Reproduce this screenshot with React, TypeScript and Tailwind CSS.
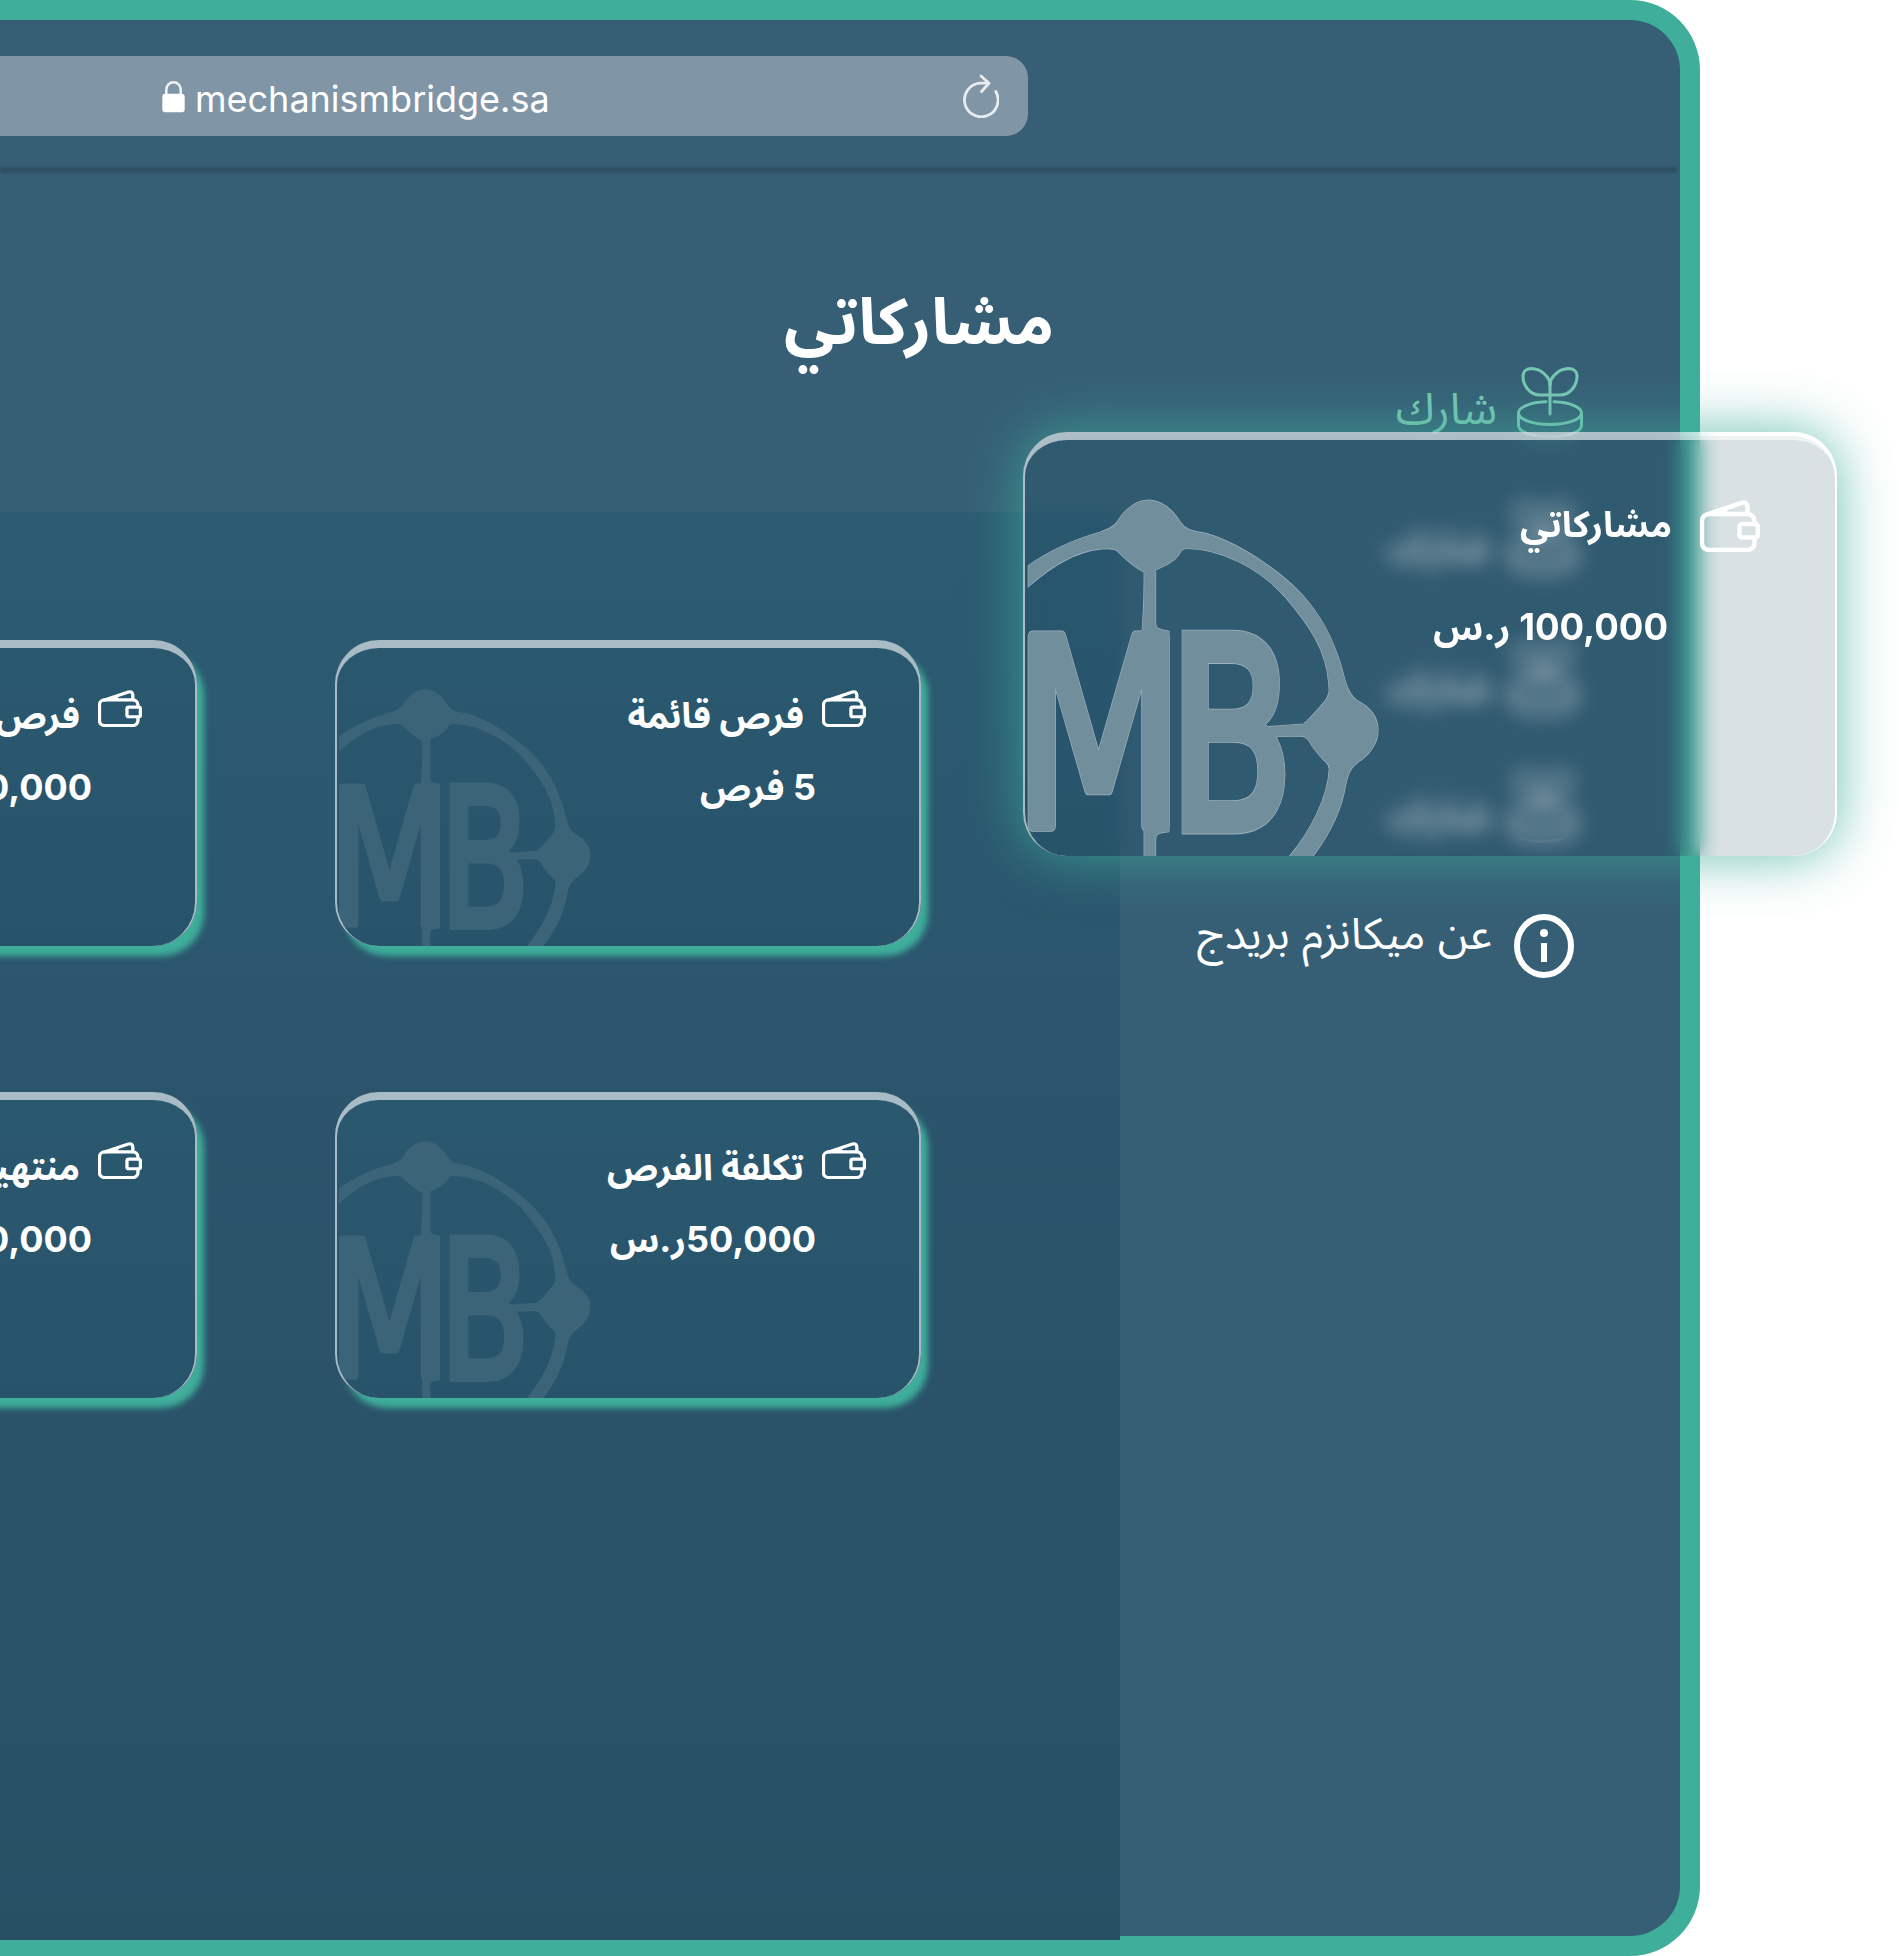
type IconProps = { className?: string };

function WalletIcon({ className }: IconProps) {
  return (
    <svg viewBox="0 0 60 52" preserveAspectRatio="none" fill="none" stroke="currentColor" strokeWidth="4.500" strokeLinejoin="round" strokeLinecap="round" className={className}>
      <path d="M54.500 23.500V21a7 7 0 0 0-7-7H9a7 7 0 0 0-7 7v22a7 7 0 0 0 7 7h38.500a7 7 0 0 0 7-7v-5" />
      <path d="M9 14 41.500 2.900Q47.300 1.400 47.500 7.500V13.500" />
      <path d="M10 13 27 8.500V13Z" fill="currentColor" strokeWidth="1" />
      <rect x="39.500" y="24" width="18.300" height="13.600" rx="2.500" />
    </svg>
  );
}

function PlantIcon({ className }: IconProps) {
  return (
    <svg viewBox="0 0 66 72" fill="none" stroke="currentColor" strokeWidth="3" strokeLinecap="round" className={className}>
      <path d="M33 28H23C12 28 6 17.500 6 9.500 6 4 10 1.600 14.500 1.600 24 2 33 9.500 33 18" />
      <path d="M33 28h10c11 0 17-10.500 17-18.500 0-5.500-4-7.900-8.500-7.900C42 2 33 9.500 33 18" />
      <path d="M33 16v31" />
      <path d="M29 34.700C13.500 35.200 1.500 40 1.500 46c0 6.400 14 11.500 31.500 11.500S64.500 52.400 64.500 46c0-6-12-10.800-27.500-11.300" />
      <path d="M1.500 46v12.500c0 6.400 14 11.500 31.500 11.500s31.500-5.100 31.500-11.500V46" />
    </svg>
  );
}

function InfoIcon({ className }: IconProps) {
  return (
    <svg viewBox="0 0 60 64" className={className}>
      <ellipse cx="30" cy="32" rx="27" ry="29" fill="none" stroke="currentColor" strokeWidth="6" />
      <circle cx="30" cy="19" r="4" fill="currentColor" />
      <rect x="27" y="29" width="6" height="19" fill="currentColor" />
    </svg>
  );
}

function LockIcon() {
  return (
    <svg viewBox="0 0 23 33" className="h-[33px] w-[23px]">
      <path d="M4.300 15V9.500a7.200 7.200 0 0 1 14.400 0V15" fill="none" stroke="#eef1f4" strokeWidth="2.600" />
      <rect x="0.300" y="13.800" width="22.400" height="18.400" rx="3" fill="#fff" />
    </svg>
  );
}

function ReloadIcon() {
  return (
    <svg viewBox="0 0 38 44" fill="none" stroke="#e9edf0" strokeWidth="2.800" strokeLinecap="round" strokeLinejoin="round" className="h-[44px] w-[38px]">
      <path d="M34.800 17.500A16.800 16.800 0 1 1 19 9.200h8" />
      <path d="m20 2 8 7.200-7.500 8.300" />
    </svg>
  );
}

const RING =
  "M85 655C150 610 220 580 300 558C330 548 345 540 352 528C375 490 410 465 447 465C485 465 520 495 542 530C555 550 575 555 610 560C700 580 850 670 925 760C985 830 1015 905 1035 985C1045 1020 1055 1035 1070 1045C1110 1065 1135 1095 1135 1132C1135 1170 1110 1205 1075 1225C1055 1240 1045 1255 1038 1290C1025 1370 985 1440 940 1498L870 1498C930 1430 985 1330 989 1245C989 1230 980 1228 968 1215C950 1195 940 1185 932 1170C922 1152 915 1150 900 1149L800 1152L760 1153L760 1123L800 1123L912 1115C920 1108 950 1078 975 1050C990 1030 990 1020 987 995C980 900 930 830 860 750C780 660 660 605 560 605C545 605 545 612 535 625C520 645 495 655 467 667L467 820C467 840 475 838 507 846L507 1427C475 1432 467 1432 467 1450L467 1498L433 1498L433 1020L427 845C430 800 434 760 433 674C405 660 375 635 352 612C340 602 320 605 300 607C220 615 150 660 85 716Z";

function LogoShapes({ grow }: { grow: number }) {
  return (
    <>
      <path d={RING} strokeWidth={grow * 6} />
      <g fontFamily="DejaVu Sans" fontWeight="400" fontSize="100">
        <text transform="translate(38.400 1410) scale(5.97 7.54)" strokeWidth={4 + grow} strokeLinejoin="round">M</text>
        <text transform="translate(505 1416.600) scale(5.5 7.64)" strokeWidth={4.3 + grow}>B</text>
      </g>
    </>
  );
}

function Logo({ className, outlined }: { className: string; outlined?: boolean }) {
  return (
    <svg direction="ltr" viewBox="69 267 1081 1231" preserveAspectRatio="none" className={className}>
      {outlined && (
        <g fill="#a0b4bf" stroke="#a0b4bf">
          <LogoShapes grow={0.6} />
        </g>
      )}
      <g fill="currentColor" stroke="currentColor">
        <LogoShapes grow={0} />
      </g>
    </svg>
  );
}

function StatCard({ title, value }: { title: string; value: string }) {
  return (
    <div className="relative h-[306px] w-[586px] rounded-[44px] shadow-[8px_11px_6px_-1px_#3fae9b]">
      <div dir="ltr" className="absolute inset-0 overflow-hidden rounded-[44px] bg-gradient-to-b from-[#2a586f] to-[#28546b]">
        <Logo className="h-[306px] w-[259px] text-[#3c6478]" />
      </div>
      <div className="relative h-full rounded-[44px] border-x-2 border-t-8 border-white/60 pt-[42px] pr-[53px]">
        <div className="flex items-start gap-[18px]">
          <WalletIcon className="h-[37px] w-[44px] shrink-0" />
          <h2 className="text-[36px] leading-[50px] font-bold whitespace-nowrap">{title}</h2>
        </div>
        <p className="mt-[23px] mr-[50px] text-[36px] leading-[48px] font-bold whitespace-nowrap">{value}</p>
      </div>
    </div>
  );
}

function NavItem({ className }: { className: string }) {
  return (
    <li className={`flex h-[72px] items-start gap-[20px] ${className}`}>
      <PlantIcon className="h-[72px] w-[66px]" />
      <span className="mt-[11px] text-[44px] leading-[60px]">شارك</span>
    </li>
  );
}

function FloatingCard() {
  return (
    <section className="absolute top-[432px] left-[1023px] h-[424px] w-[814px]">
      <div className="absolute inset-0 overflow-hidden rounded-[44px] backdrop-blur-[10px]">
        <div className="absolute inset-x-0.5 top-1 bottom-0 rounded-[42px] bg-[rgba(16,61,81,0.155)]" />
        <Logo outlined className="relative h-[424px] w-[360px] text-[#718e9c]" />
      </div>
      <div dir="rtl" className="relative h-full rounded-[44px] border-x-2 border-t-8 border-white/60 pt-[60px] pr-[75px] shadow-[0_0_56px_rgba(63,174,155,0.78)]">
        <div className="flex items-start gap-[28px]">
          <WalletIcon className="h-[52px] w-[60px] shrink-0" />
          <h2 className="text-[36px] leading-[48px] font-bold">مشاركاتي</h2>
        </div>
        <p className="mt-[51px] mr-[92px] text-[36.500px] leading-[48px] font-bold">100,000 ر.س</p>
      </div>
    </section>
  );
}

export default function App() {
  return (
    <div className="relative h-[1956px] w-[1899px] overflow-hidden bg-white font-['Inter','Noto_Sans_Arabic',sans-serif] text-white">
      <div className="h-[1956px] w-[1700px] rounded-r-[70px] bg-[#3fae9b] py-5 pr-5">
        <div className="flex h-[1916px] flex-col rounded-r-[50px] bg-[#365f76]">
          <header className="h-[147px] shrink-0 pt-9">
            <div className="flex h-20 w-[1028px] items-center rounded-r-[22px] bg-[#8096a6] pr-[29px] pl-[162px]">
              <LockIcon />
              <span className="ml-[10px] pt-1.5 text-[36px] leading-[48px] font-normal">mechanismbridge.sa</span>
              <span className="ml-auto">
                <ReloadIcon />
              </span>
            </div>
          </header>
          <div className="h-1.5 w-[1677px] shrink-0 bg-[#2d4f61] blur-[1.5px]" />
          <div className="flex min-h-0 grow">
            <main dir="rtl" className="-mb-1 flex w-[1120px] shrink-0 flex-col">
              <div className="h-[339px] shrink-0 pt-[108px] pr-[66px]">
                <h1 className="text-[64px] leading-[80px] font-bold">مشاركاتي</h1>
              </div>
              <div className="grow overflow-hidden bg-gradient-to-b from-[#2c5c72] via-[#2b546c] via-45% to-[#285065] pt-32 pr-[199px]">
                <div className="grid w-[1310px] grid-cols-[586px_586px] gap-x-[138px] gap-y-[146px]">
                  <StatCard title="فرص قائمة" value="5 فرص" />
                  <StatCard title="فرص منتهية" value="50,000 ر.س" />
                  <StatCard title="تكلفة الفرص" value="50,000ر.س" />
                  <StatCard title="منتهية" value="50,000 ر.س" />
                </div>
              </div>
            </main>
            <aside dir="rtl" className="grow pt-[194px] pr-[97px]">
              <ul className="flex flex-col">
                <NavItem className="text-[#78c8b4]" />
                <NavItem className="mt-[64px] mr-[7px]" />
                <NavItem className="mt-[68px] mr-[7px]" />
                <NavItem className="mt-[56px] mr-[7px]" />
                <li className="mt-[60px] mr-[9px] flex items-start gap-[22px]">
                  <InfoIcon className="mt-[11px] h-16 w-[60px]" />
                  <span className="text-[44px] leading-[60px] whitespace-nowrap">عن ميكانزم بريدج</span>
                </li>
              </ul>
            </aside>
          </div>
        </div>
      </div>
      <FloatingCard />
    </div>
  );
}
